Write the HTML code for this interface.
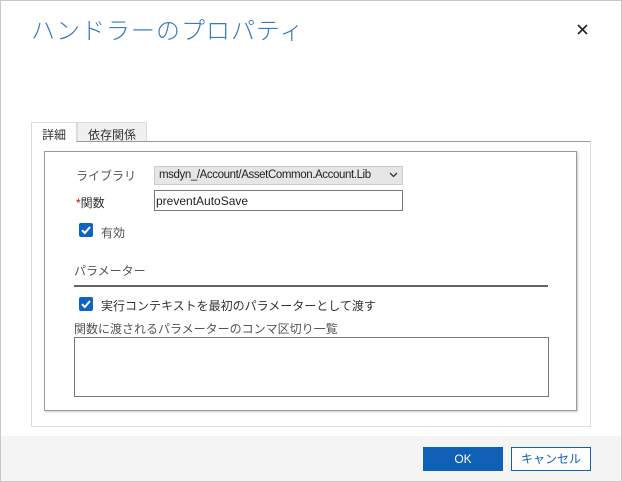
<!DOCTYPE html>
<html><head><meta charset="utf-8"><style>
*{box-sizing:border-box;margin:0;padding:0}
body{width:622px;height:482px;position:relative;background:#fff;font-family:"Liberation Sans","Noto Sans CJK JP",sans-serif;font-size:12px;color:#333;overflow:hidden}
.frame{position:absolute;left:0;top:0;width:622px;height:482px;border:1px solid #c8c8c8}
.a{position:absolute;white-space:nowrap}
</style></head><body>
<div class="frame"></div>
<div class="a" style="left:31px;top:11px;font-size:24px;color:#3a7bbd;letter-spacing:1px;font-family:'Noto Sans CJK JP',sans-serif;font-weight:300">ハンドラーのプロパティ</div>
<svg class="a" style="left:577px;top:24px" width="11" height="11" viewBox="0 0 11 11"><path d="M1 1L10 10M10 1L1 10" stroke="#222" stroke-width="1.6"/></svg>
<div class="a" style="left:31px;top:141px;width:560px;height:286px;border:1px solid #dcdcdc;border-top:1px solid #9a9a9a"></div>
<div class="a" style="left:31px;top:122px;width:46px;height:21px;background:#fff;border:1px solid #dcdcdc;border-bottom:none;padding:3px 0 0 10px">詳細</div>
<div class="a" style="left:77px;top:122px;width:70px;height:19px;background:#f0f0f0;border:1px solid #dcdcdc;border-bottom:none;padding:3px 0 0 10px">依存関係</div>
<div class="a" style="left:44px;top:151px;width:533px;height:260px;border:1px solid #999;box-shadow:1px 1px 2px #ccc"></div>
<div class="a" style="left:76px;top:167px;color:#555">ライブラリ</div>
<div class="a" style="left:154px;top:166px;width:249px;height:19px;background:#e6e6e6;border:1px solid #ccc;padding:2px 0 0 4px;color:#222;font-size:11.5px;letter-spacing:-0.4px;overflow:hidden">msdyn_/Account/AssetCommon.Account.Lib</div>
<div class="a" style="left:386px;top:168px;width:15px;height:15px;background:#e6e6e6"></div>
<svg class="a" style="left:389px;top:172px" width="9" height="6" viewBox="0 0 9 6"><path d="M1 1L4.5 4.5L8 1" stroke="#333" fill="none" stroke-width="1.3"/></svg>
<div class="a" style="left:76px;top:194px;color:#333"><span style="color:#c00">*</span>関数</div>
<div class="a" style="left:154px;top:190px;width:249px;height:21px;border:1px solid #777;padding:3px 0 0 1px;color:#222">preventAutoSave</div>
<div class="a" style="left:79px;top:223px;width:14px;height:14px;background:#0f63c2;border-radius:2px"></div>
<svg class="a" style="left:79px;top:223px" width="14" height="14" viewBox="0 0 14 14"><path d="M3 7.2L5.8 10L11 4" stroke="#fff" fill="none" stroke-width="2"/></svg>
<div class="a" style="left:101px;top:224px;color:#555">有効</div>
<div class="a" style="left:74px;top:262px;color:#555">パラメーター</div>
<div class="a" style="left:74px;top:285px;width:474px;height:2px;background:#666"></div>
<div class="a" style="left:79px;top:297px;width:14px;height:14px;background:#0f63c2;border-radius:2px"></div>
<svg class="a" style="left:79px;top:297px" width="14" height="14" viewBox="0 0 14 14"><path d="M3 7.2L5.8 10L11 4" stroke="#fff" fill="none" stroke-width="2"/></svg>
<div class="a" style="left:101px;top:297px;color:#333">実行コンテキストを最初のパラメーターとして渡す</div>
<div class="a" style="left:74px;top:320px;color:#555">関数に渡されるパラメーターのコンマ区切り一覧</div>
<div class="a" style="left:74px;top:337px;width:475px;height:60px;border:1px solid #777"></div>
<div class="a" style="left:1px;top:436px;width:620px;height:45px;background:#f4f4f4"></div>
<div class="a" style="left:423px;top:447px;width:80px;height:24px;background:#1160b7;color:#fff;text-align:center;line-height:24px">OK</div>
<div class="a" style="left:511px;top:447px;width:80px;height:24px;background:#fff;border:1px solid #1160b7;color:#1160b7;text-align:center;line-height:22px">キャンセル</div>
</body></html>
